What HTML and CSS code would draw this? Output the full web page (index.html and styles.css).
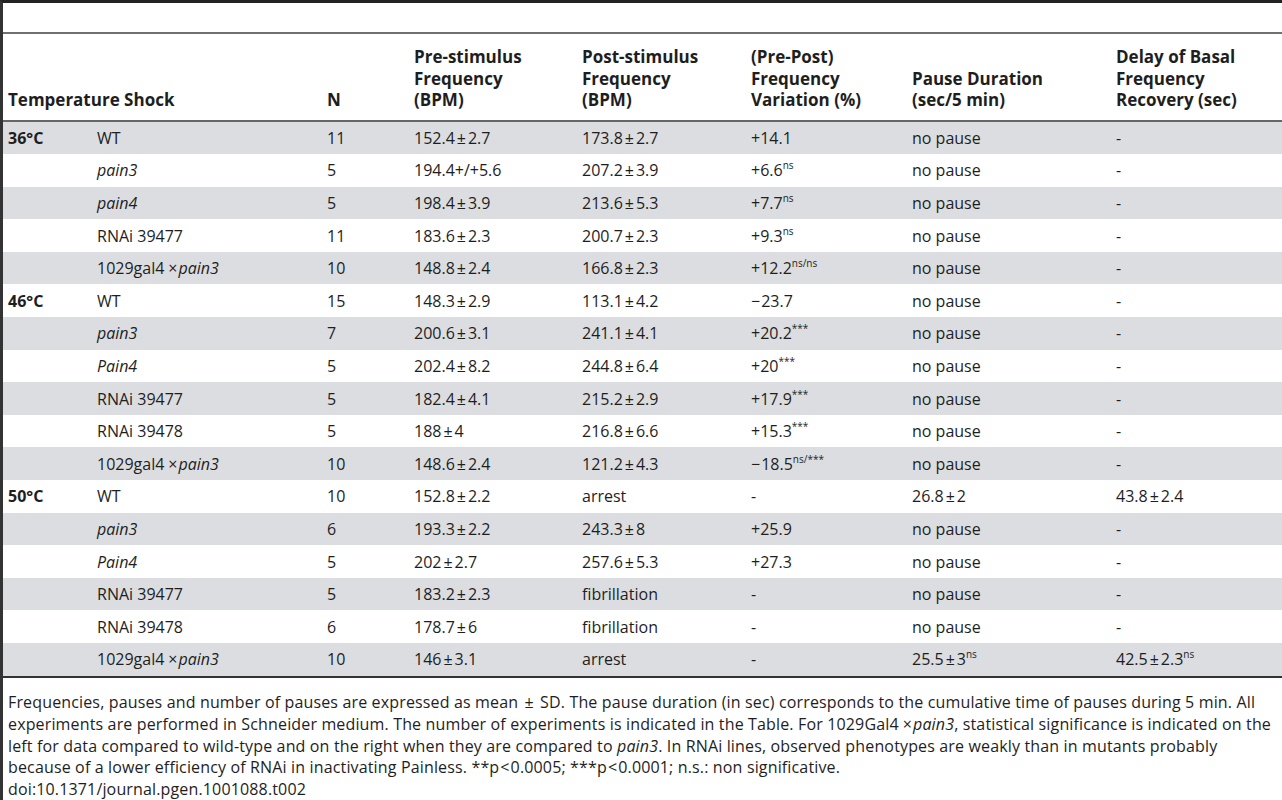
FILE: index.html
```html
<!DOCTYPE html>
<html lang="en">
<head>
    <meta charset="UTF-8">
    <meta name="viewport" content="width=device-width, initial-scale=1.0">
    <title>Table 2</title>
    <link rel="stylesheet" href="styles.css">
</head>
<body>
    <div class="page">
        <table class="data">
            <colgroup>
                <col class="c-temp">
                <col class="c-line">
                <col class="c-n">
                <col class="c-pre">
                <col class="c-post">
                <col class="c-var">
                <col class="c-pause">
                <col class="c-delay">
            </colgroup>
            <thead>
                <tr class="spacer"><th colspan="8"></th></tr>
                <tr class="head">
                    <th colspan="2">Temperature Shock</th>
                    <th>N</th>
                    <th>Pre-stimulus<br>Frequency<br>(BPM)</th>
                    <th>Post-stimulus<br>Frequency<br>(BPM)</th>
                    <th>(Pre-Post)<br>Frequency<br>Variation (%)</th>
                    <th>Pause Duration<br>(sec/5 min)</th>
                    <th>Delay of Basal<br>Frequency<br>Recovery (sec)</th>
                </tr>
            </thead>
            <tbody>
                <tr>
                    <td class="temp">36°C</td><td>WT</td><td>11</td>
                    <td>152.4<span class="pm">±</span>2.7</td><td>173.8<span class="pm">±</span>2.7</td><td>+14.1</td><td>no pause</td><td>-</td>
                </tr>
                <tr>
                    <td></td><td><i>pain3</i></td><td>5</td>
                    <td>194.4+/+5.6</td><td>207.2<span class="pm">±</span>3.9</td><td>+6.6<sup>ns</sup></td><td>no pause</td><td>-</td>
                </tr>
                <tr>
                    <td></td><td><i>pain4</i></td><td>5</td>
                    <td>198.4<span class="pm">±</span>3.9</td><td>213.6<span class="pm">±</span>5.3</td><td>+7.7<sup>ns</sup></td><td>no pause</td><td>-</td>
                </tr>
                <tr>
                    <td></td><td>RNAi 39477</td><td>11</td>
                    <td>183.6<span class="pm">±</span>2.3</td><td>200.7<span class="pm">±</span>2.3</td><td>+9.3<sup>ns</sup></td><td>no pause</td><td>-</td>
                </tr>
                <tr>
                    <td></td><td>1029gal4<span class="x">×</span><i>pain3</i></td><td>10</td>
                    <td>148.8<span class="pm">±</span>2.4</td><td>166.8<span class="pm">±</span>2.3</td><td>+12.2<sup>ns/ns</sup></td><td>no pause</td><td>-</td>
                </tr>
                <tr>
                    <td class="temp">46°C</td><td>WT</td><td>15</td>
                    <td>148.3<span class="pm">±</span>2.9</td><td>113.1<span class="pm">±</span>4.2</td><td><span class="minus">−</span>23.7</td><td>no pause</td><td>-</td>
                </tr>
                <tr>
                    <td></td><td><i>pain3</i></td><td>7</td>
                    <td>200.6<span class="pm">±</span>3.1</td><td>241.1<span class="pm">±</span>4.1</td><td>+20.2<sup>***</sup></td><td>no pause</td><td>-</td>
                </tr>
                <tr>
                    <td></td><td><i>Pain4</i></td><td>5</td>
                    <td>202.4<span class="pm">±</span>8.2</td><td>244.8<span class="pm">±</span>6.4</td><td>+20<sup>***</sup></td><td>no pause</td><td>-</td>
                </tr>
                <tr>
                    <td></td><td>RNAi 39477</td><td>5</td>
                    <td>182.4<span class="pm">±</span>4.1</td><td>215.2<span class="pm">±</span>2.9</td><td>+17.9<sup>***</sup></td><td>no pause</td><td>-</td>
                </tr>
                <tr>
                    <td></td><td>RNAi 39478</td><td>5</td>
                    <td>188<span class="pm">±</span>4</td><td>216.8<span class="pm">±</span>6.6</td><td>+15.3<sup>***</sup></td><td>no pause</td><td>-</td>
                </tr>
                <tr>
                    <td></td><td>1029gal4<span class="x">×</span><i>pain3</i></td><td>10</td>
                    <td>148.6<span class="pm">±</span>2.4</td><td>121.2<span class="pm">±</span>4.3</td><td><span class="minus">−</span>18.5<sup>ns/***</sup></td><td>no pause</td><td>-</td>
                </tr>
                <tr>
                    <td class="temp">50°C</td><td>WT</td><td>10</td>
                    <td>152.8<span class="pm">±</span>2.2</td><td>arrest</td><td>-</td><td>26.8<span class="pm">±</span>2</td><td>43.8<span class="pm">±</span>2.4</td>
                </tr>
                <tr>
                    <td></td><td><i>pain3</i></td><td>6</td>
                    <td>193.3<span class="pm">±</span>2.2</td><td>243.3<span class="pm">±</span>8</td><td>+25.9</td><td>no pause</td><td>-</td>
                </tr>
                <tr>
                    <td></td><td><i>Pain4</i></td><td>5</td>
                    <td>202<span class="pm">±</span>2.7</td><td>257.6<span class="pm">±</span>5.3</td><td>+27.3</td><td>no pause</td><td>-</td>
                </tr>
                <tr>
                    <td></td><td>RNAi 39477</td><td>5</td>
                    <td>183.2<span class="pm">±</span>2.3</td><td>fibrillation</td><td>-</td><td>no pause</td><td>-</td>
                </tr>
                <tr>
                    <td></td><td>RNAi 39478</td><td>6</td>
                    <td>178.7<span class="pm">±</span>6</td><td>fibrillation</td><td>-</td><td>no pause</td><td>-</td>
                </tr>
                <tr>
                    <td></td><td>1029gal4<span class="x">×</span><i>pain3</i></td><td>10</td>
                    <td>146<span class="pm">±</span>3.1</td><td>arrest</td><td>-</td><td>25.5<span class="pm">±</span>3<sup>ns</sup></td><td>42.5<span class="pm">±</span>2.3<sup>ns</sup></td>
                </tr>
            </tbody>
        </table>

        <p class="caption">Frequencies, pauses and number of pauses are expressed as mean <span class="pm">±</span> SD. The pause duration (in sec) corresponds to the cumulative time of pauses during 5 min. All<br>experiments are performed in Schneider medium. The number of experiments is indicated in the Table. For 1029Gal4<span class="x">×</span><i>pain3</i>, statistical significance is indicated on the<br>left for data compared to wild-type and on the right when they are compared to <i>pain3</i>. In RNAi lines, observed phenotypes are weakly than in mutants probably<br>because of a lower efficiency of RNAi in inactivating Painless. **p<span class="lt">&lt;</span>0.0005; ***p<span class="lt">&lt;</span>0.0001; n.s.: non significative.<br>doi:10.1371/journal.pgen.1001088.t002</p>
    </div>
</body>
</html>
```

FILE: styles.css
```css
body {
    margin: 0;
    font-family: "Open Sans", "Liberation Sans", sans-serif;
    font-size: 16px;
    color: #1e1e1e;
    background: #fff;
}
.page {
    border-top: 3px solid #222;
    border-left: 3px solid #333;
    min-height: 797px;
    box-sizing: border-box;
}
.data {
    width: 100%;
    border-collapse: collapse;
    table-layout: fixed;
}
.c-temp { width: 89px; }
.c-line { width: 230px; }
.c-n { width: 87px; }
.c-pre { width: 168px; }
.c-post { width: 169px; }
.c-var { width: 161px; }
.c-pause { width: 204px; }
.spacer th {
    height: 29px;
    padding: 0;
    border-bottom: 2px solid #707070;
}
.head th {
    text-align: left;
    vertical-align: bottom;
    font-size: 17px;
    font-weight: bold;
    line-height: 21.5px;
    padding: 12px 0 9px 5px;
    border-bottom: 2px solid #666;
}
tbody td {
    height: 32.6px;
    padding: 0 0 0 5px;
    line-height: 20px;
    white-space: nowrap;
}
tbody tr:nth-child(odd) {
    background: #dcdde0;
}
tbody tr:last-child td {
    border-bottom: 2px solid #333;
}
.temp {
    font-weight: bold;
}
.pm {
    margin: 0 2px;
}
.lt {
    margin: 0 1px;
}
.x {
    margin: 0 1px 0 4px;
}
.minus {
    margin-right: 1px;
}
sup {
    font-size: 10px;
    line-height: 0;
    vertical-align: 7px;
}
.caption {
    margin: 14.5px 0 0;
    padding-left: 5px;
    line-height: 21.7px;
    letter-spacing: 0.15px;
    white-space: nowrap;
}
```
